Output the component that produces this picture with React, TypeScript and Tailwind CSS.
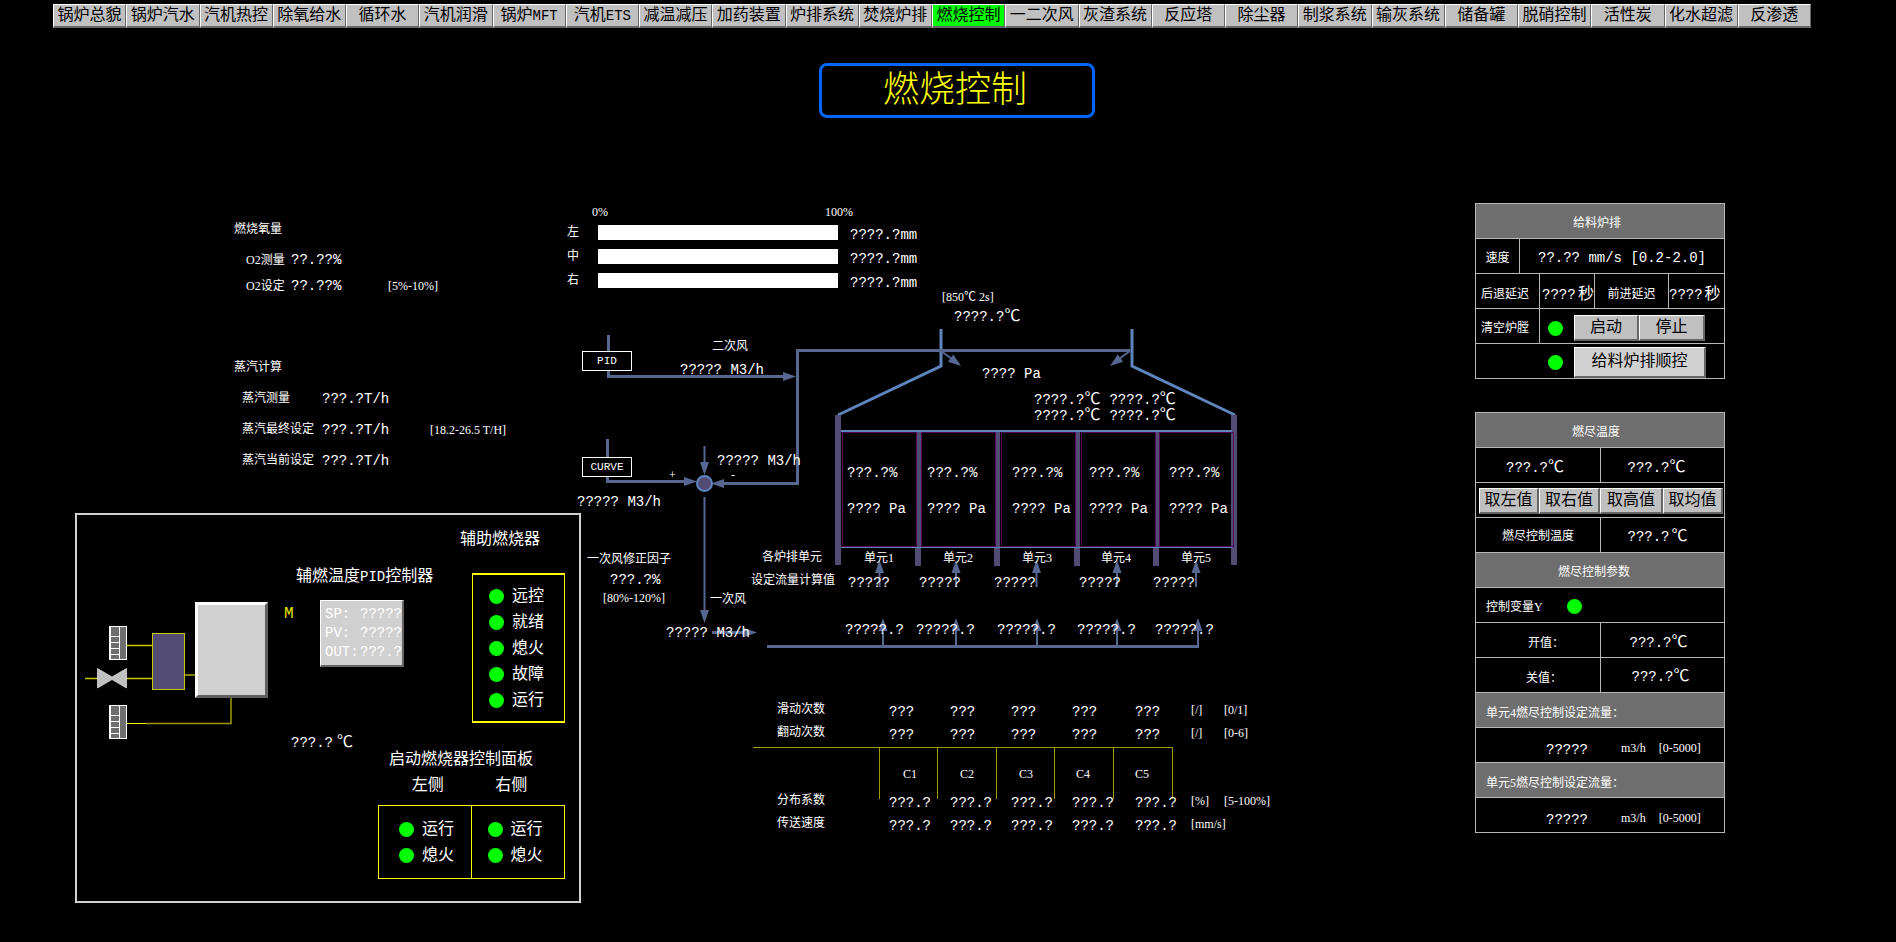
import type { ReactNode } from 'react';

const NAV = [
  '锅炉总貌', '锅炉汽水', '汽机热控', '除氧给水', '循环水', '汽机润滑', '锅炉MFT', '汽机ETS',
  '减温减压', '加药装置', '炉排系统', '焚烧炉排', '燃烧控制', '一二次风', '灰渣系统', '反应塔',
  '除尘器', '制浆系统', '输灰系统', '储备罐', '脱硝控制', '活性炭', '化水超滤', '反渗透',
];
const ACTIVE = '燃烧控制';

const UNITS = [
  { id: 1, cell: 'left-[282px]', label: 'left-[299px]', set: 'left-[283px]', flow: 'left-[280px]', head: 'pl-3.5' },
  { id: 2, cell: 'left-[362px]', label: 'left-[378px]', set: 'left-[354px]', flow: 'left-[351px]', head: 'pl-2.5' },
  { id: 3, cell: 'left-[447px]', label: 'left-[457px]', set: 'left-[429px]', flow: 'left-[432px]', head: 'pl-2' },
  { id: 4, cell: 'left-[524px]', label: 'left-[536px]', set: 'left-[514px]', flow: 'left-[512px]', head: 'pl-1' },
  { id: 5, cell: 'left-[604px]', label: 'left-[616px]', set: 'left-[588px]', flow: 'left-[590px]', head: 'pl-0' },
];

const PIPE = '#566792';
const WALL = '#524b73';
const STEEL = '#5f85bf';

/** Live process value in the fixed-width face. */
function Val({ children, className = '' }: { children: ReactNode; className?: string }) {
  return <span className={`text-sm leading-[18px] whitespace-pre ${className}`}>{children}</span>;
}

/** Temperature value followed by a full-width degree sign. */
function Temp({ value, className = '' }: { value: string; className?: string }) {
  return (
    <span className={`inline-flex h-4 items-center whitespace-pre ${className}`}>
      <Val>{value}</Val>
      <span className="text-base leading-4">℃</span>
    </span>
  );
}

/** Small range, unit or index text. */
function Note({ children, className = '' }: { children: ReactNode; className?: string }) {
  return (
    <span className={`font-['Liberation_Serif','Noto_Sans_CJK_SC',serif] text-xs leading-[18px] whitespace-pre ${className}`}>
      {children}
    </span>
  );
}

function Led() {
  return <span className="inline-block size-[15px] shrink-0 rounded-full bg-[#00ff00]" />;
}

function Key({ children, className = '' }: { children: ReactNode; className?: string }) {
  return (
    <button
      type="button"
      className={`border-t border-l border-r-2 border-b-2 border-t-white border-l-white border-r-[#666666] border-b-[#666666] text-base leading-none whitespace-nowrap text-black ${className}`}
    >
      {children}
    </button>
  );
}

function NavBar() {
  return (
    <nav className="grid grid-cols-[repeat(24,minmax(0,1fr))] pt-1 pr-[85px] pl-[53px]">
      {NAV.map((name) => (
        <button
          key={name}
          type="button"
          className={`h-6 border-t border-r border-b-2 border-l border-t-white border-r-[#666666] border-b-[#666666] border-l-white text-base leading-none whitespace-nowrap text-black ${
            name === ACTIVE ? 'bg-[#00ff00]' : 'bg-[#c0c0c0]'
          }`}
        >
          {/[A-Z]/.test(name) ? (
            <>
              {name.slice(0, 2)}
              <span className="text-sm leading-none">{name.slice(2)}</span>
            </>
          ) : (
            name
          )}
        </button>
      ))}
    </nav>
  );
}

function Readings() {
  return (
    <div className="pt-4 pl-[159px] text-xs">
      <h2 className="leading-[22px]">燃烧氧量</h2>
      <div className="mt-1.5 ml-3 grid auto-rows-[26px] grid-cols-[45px_97px_auto] items-center">
        <span><Note>O2</Note>测量</span>
        <Val>??.??%</Val>
        <span />
        <span><Note>O2</Note>设定</span>
        <Val>??.??%</Val>
        <Note>[5%-10%]</Note>
      </div>
      <h2 className="mt-[58px] leading-[22px]">蒸汽计算</h2>
      <div className="mt-1 ml-2 grid auto-rows-[31px] grid-cols-[80px_108px_auto] items-center">
        <span>蒸汽测量</span>
        <Val>???.?T/h</Val>
        <span />
        <span>蒸汽最终设定</span>
        <Val>???.?T/h</Val>
        <Note>[18.2-26.5 T/H]</Note>
        <span>蒸汽当前设定</span>
        <Val>???.?T/h</Val>
        <span />
      </div>
    </div>
  );
}

function Ladder({ x, y }: { x: number; y: number }) {
  return (
    <g transform={`translate(${x} ${y})`}>
      <rect width="18" height="34" fill="#6e6e6e" />
      <path d="M10.5 0V34M17.5 0V34M0 0.5H18M0 10.5H10M0 16.5H10M0 22.5H10M0 28.5H10M0 33.5H18" stroke="#fff" strokeWidth="1" fill="none" />
      <path d="M1 0V34" stroke="#fff" strokeWidth="2" />
    </g>
  );
}

function LampRow({ name }: { name: string }) {
  return (
    <li className="flex h-[26px] items-center gap-2">
      <Led />
      <span className="pt-0.5">{name}</span>
    </li>
  );
}

function BurnerPanel() {
  return (
    <section className="relative mt-[37px] flex h-[390px] justify-end border-2 border-[#d0d0d0] pr-3.5 text-base leading-5">
      <svg className="absolute top-0 left-0" width="300" height="386" viewBox="77 515 300 386" aria-hidden="true">
        <path d="M127 645.5H152M85 678.5H98M126 678.5H152" stroke="#c8c800" strokeWidth="1.5" />
        <path d="M185 675H195" stroke="#808000" strokeWidth="2" />
        <path d="M127 723.5H146" stroke="#ffff00" strokeWidth="1" />
        <path d="M146 723.5H231V698" stroke="#a09a00" strokeWidth="1.5" fill="none" />
        <rect x="152.5" y="633.5" width="32" height="56" fill={WALL} stroke="#c8c800" />
        <rect x="195" y="602" width="73" height="96" fill="#d0d0d0" />
        <path d="M195 602H268L265 605H198V695L195 698Z" fill="#fff" />
        <path d="M268 602V698H195L198 695H265V605Z" fill="#606060" />
        <Ladder x={109} y={626} />
        <Ladder x={109} y={705} />
        <path d="M97.5 668.5L112 677L126.5 668.5V688L112 679.5L97.5 688Z" fill="#c0c0c0" stroke="#e8e8e8" strokeWidth="0.7" />
      </svg>
      <h3 className="absolute top-[52px] left-[219px] whitespace-nowrap">
        辅燃温度<span className="text-sm">PID</span>控制器
      </h3>
      <span className="absolute top-[91px] left-[207px] text-base leading-4 text-[#e6e600]">M</span>
      <dl className="absolute top-[85px] left-[243px] grid h-[67px] w-[84px] grid-cols-[35px_1fr] content-center gap-y-0.5 border-t border-r-2 border-b-2 border-l border-t-white border-r-[#666666] border-b-[#666666] border-l-white bg-[#d0d0d0] pl-1 text-sm leading-[17px]">
        <dt>SP:</dt>
        <dd>?????</dd>
        <dt>PV:</dt>
        <dd>?????</dd>
        <dt>OUT:</dt>
        <dd>???.?</dd>
      </dl>
      <Temp value="???.?" className="absolute top-[220px] left-[214px] gap-1" />

      <div className="flex w-[187px] flex-col items-end pt-[15px]">
        <h3 className="pr-[25px]">辅助燃烧器</h3>
        <ul className="mt-[23px] w-[93px] border border-y-2 border-[#ffff00] py-2 pl-4">
          {['远控', '就绪', '熄火', '故障', '运行'].map((name) => (
            <LampRow key={name} name={name} />
          ))}
        </ul>
        <h3 className="mt-[27px] w-full pl-[11px]">启动燃烧器控制面板</h3>
        <div className="mt-1.5 grid w-full grid-cols-2 text-center">
          <span className="pl-1.5">左侧</span>
          <span className="pr-3.5">右侧</span>
        </div>
        <div className="mt-[9px] grid w-full grid-cols-2 border border-[#ffff00]">
          <ul className="border-r border-[#ffff00] py-2.5 pl-5">
            <LampRow name="运行" />
            <LampRow name="熄火" />
          </ul>
          <ul className="py-2.5 pl-4">
            <LampRow name="运行" />
            <LampRow name="熄火" />
          </ul>
        </div>
      </div>
    </section>
  );
}

function LevelBars() {
  return (
    <div>
      <div className="flex h-[17px] pl-[27px]">
        <Note className="w-[233px] leading-3">0%</Note>
        <Note className="leading-3">100%</Note>
      </div>
      {['左', '中', '右'].map((side) => (
        <div key={side} className="flex h-6 items-center">
          <span className="w-[33px] pt-0.5 pl-0.5 text-xs">{side}</span>
          <div className="h-[15px] w-[240px] bg-white" />
          <Val className="ml-3 pt-1.5">????.?mm</Val>
        </div>
      ))}
    </div>
  );
}

function Arrow({ x, y, angle }: { x: number; y: number; angle: number }) {
  return <path d="M0 0L-13 -4.5V4.5Z" fill={PIPE} transform={`translate(${x} ${y}) rotate(${angle})`} />;
}

function Piping() {
  const rooms = [842, 921, 1001, 1081, 1159];
  const dividers = [918.5, 997.5, 1077.5, 1156.5];
  const upper = [879.5, 956, 1036.5, 1117, 1196];
  const lower = [883, 956, 1037, 1117, 1198];
  return (
    <svg className="absolute top-0 left-0" width="700" height="640" viewBox="565 203 700 640" fill="none" aria-hidden="true">
      {/* furnace shell */}
      <path d="M941 329V366L838 415M1132 329V366L1235 415" stroke={STEEL} strokeWidth="3" />
      <rect x="835" y="415" width="6" height="150" fill={WALL} />
      <rect x="1231" y="415" width="6" height="150" fill={WALL} />
      {dividers.map((x) => (
        <g key={x} fill={WALL}>
          <rect x={x - 1.5} y="432" width="4" height="115" />
          <rect x={x - 3.5} y="547" width="6" height="19" />
        </g>
      ))}
      {rooms.map((x) => (
        <rect key={x} x={x + 0.5} y="432.5" width="74" height="114" stroke="#550055" />
      ))}
      <path d="M841 431H1232" stroke={STEEL} strokeWidth="2" />
      <path d="M841 547.5H1232" stroke={STEEL} strokeWidth="1" />

      {/* air ducts */}
      <g stroke={PIPE} strokeWidth="3">
        <path d="M608.5 335V376.5H785" />
        <path d="M1130 350.5H797.5V483.5H722" />
        <path d="M607.5 439V481.5H686" />
        <path d="M941 351L952 359M1130 351L1119 359" strokeWidth="2" />
        <path d="M704.5 446V463" strokeWidth="2" />
        <path d="M704.5 497V612" strokeWidth="2" />
        <path d="M712 632.5H746" />
        <path d="M767 646.5H1199" />
      </g>
      <Arrow x={796} y={376.5} angle={0} />
      <Arrow x={711} y={483.5} angle={180} />
      <Arrow x={697} y={481.5} angle={0} />
      <Arrow x={704.5} y={475} angle={90} />
      <Arrow x={704.5} y={623} angle={90} />
      <Arrow x={757} y={632.5} angle={0} />
      <Arrow x={961} y={366} angle={37} />
      <Arrow x={1110} y={366} angle={143} />
      <circle cx="704.5" cy="483.5" r="7.5" fill={WALL} stroke={STEEL} strokeWidth="2" />

      {/* primary air branches */}
      {upper.map((x) => (
        <g key={x}>
          <path d={`M${x} 570V587`} stroke={PIPE} strokeWidth="2" />
          <Arrow x={x} y={560} angle={-90} />
        </g>
      ))}
      {lower.map((x) => (
        <g key={x}>
          <path d={`M${x} 629V647`} stroke={PIPE} strokeWidth="2" />
          <Arrow x={x} y={618} angle={-90} />
        </g>
      ))}

      {/* distribution bracket */}
      <path d="M753 747.5H1173M879.5 747V799M937.5 747V799M996.5 747V799M1054.5 747V799M1113.5 747V799M1172.5 747V799" stroke="#a09a00" />
    </svg>
  );
}

function StrokeTable() {
  const rows = [
    { name: '滑动次数', value: '???', unit: '[/]', range: '[0/1]' },
    { name: '翻动次数', value: '???', unit: '[/]', range: '[0-6]' },
    null,
    { name: '分布系数', value: '???.?', unit: '[%]', range: '[5-100%]' },
    { name: '传送速度', value: '???.?', unit: '[mm/s]', range: '' },
  ];
  return (
    <table className="absolute top-[495px] left-[212px] w-[500px] table-fixed border-collapse text-left whitespace-nowrap">
      <colgroup>
        <col className="w-[112px]" />
        <col className="w-[61px]" span={3} />
        <col className="w-[63px]" />
        <col className="w-[56px]" />
        <col className="w-[33px]" />
        <col />
      </colgroup>
      <tbody>
        {rows.map((row) =>
          row ? (
            <tr key={row.name} className="h-[23px]">
              <th scope="row" className="p-0 text-xs leading-[18px] font-normal">{row.name}</th>
              {UNITS.map((u) => (
                <td key={u.id} className="px-0 pt-1 pb-0 text-sm leading-[18px]">{row.value}</td>
              ))}
              <td className="p-0 leading-[18px]"><Note>{row.unit}</Note></td>
              <td className="p-0 leading-[18px]"><Note>{row.range}</Note></td>
            </tr>
          ) : (
            <tr key="units" className="h-[45px]">
              <td />
              {UNITS.map((u) => (
                <th key={u.id} scope="col" className={`pt-3.5 pr-0 pb-0 leading-[18px] font-normal ${u.head}`}>
                  <Note>C{u.id}</Note>
                </th>
              ))}
            </tr>
          ),
        )}
      </tbody>
    </table>
  );
}

function Mimic() {
  return (
    <section className="relative -ml-4 h-[640px] w-[712px] leading-[18px]">
      <Piping />
      <LevelBars />

      <Note className="absolute top-[85px] left-[377px]">[850℃ 2s]</Note>
      <Temp value="????.?" className="absolute top-[106px] left-[389px]" />
      <Val className="absolute top-[162px] left-[417px]">???? Pa</Val>
      <div className="absolute top-[189px] left-[469px] grid grid-cols-2 gap-x-[9px]">
        <Temp value="????.?" />
        <Temp value="????.?" />
        <Temp value="????.?" />
        <Temp value="????.?" />
      </div>

      <span className="absolute top-[148px] left-[17px] flex h-5 w-[50px] items-center justify-center border border-white bg-black text-[11px]">PID</span>
      <span className="absolute top-[254px] left-[17px] flex h-5 w-[50px] items-center justify-center border border-white bg-black text-[11px]">CURVE</span>
      <span className="absolute top-[135px] left-[147px] text-xs leading-[18px]">二次风</span>
      <Val className="absolute top-[158px] left-[115px]">????? M3/h</Val>
      <Val className="absolute top-[249px] left-[152px]">????? M3/h</Val>
      <Note className="absolute top-[263px] left-[104px]">+</Note>
      <Note className="absolute top-[263px] left-[166px]">-</Note>
      <Val className="absolute top-[290px] left-[12px]">????? M3/h</Val>
      <span className="absolute top-[348px] left-[22px] text-xs leading-[18px]">一次风修正因子</span>
      <Val className="absolute top-[368px] left-[45px]">???.?%</Val>
      <Note className="absolute top-[386px] left-[38px]">[80%-120%]</Note>
      <span className="absolute top-[388px] left-[145px] text-xs leading-[18px]">一次风</span>
      <Val className="absolute top-[421px] left-[101px]">????? M3/h</Val>

      <span className="absolute top-[346px] left-[197px] text-xs leading-[18px]">各炉排单元</span>
      <span className="absolute top-[369px] left-[186px] text-xs leading-[18px]">设定流量计算值</span>
      {UNITS.map((u) => (
        <div key={u.id}>
          <Val className={`absolute top-[261px] ${u.cell}`}>???.?%</Val>
          <Val className={`absolute top-[297px] ${u.cell}`}>???? Pa</Val>
          <span className={`absolute top-[346px] text-xs leading-[18px] ${u.label}`}>
            单元<Note>{u.id}</Note>
          </span>
          <Val className={`absolute top-[371px] ${u.set}`}>?????</Val>
          <Val className={`absolute top-[418px] ${u.flow}`}>?????.?</Val>
        </div>
      ))}
      <StrokeTable />
    </section>
  );
}

function Row({ children, className = '' }: { children: ReactNode; className?: string }) {
  return <div className={`flex h-[35px] items-stretch border-b border-[#b8b8b8] ${className}`}>{children}</div>;
}

function Cell({ children, className = '' }: { children?: ReactNode; className?: string }) {
  return <div className={`flex items-center border-[#b8b8b8] ${className}`}>{children}</div>;
}

function FeederPanel() {
  return (
    <section className="border-x border-t border-[#b8b8b8] text-xs">
      <Row className="bg-[#6e6e6e]">
        <h2 className="flex flex-1 items-center justify-center pt-[5px] pr-1.5">给料炉排</h2>
      </Row>
      <Row>
        <Cell className="w-11 justify-center border-r pt-[5px]">速度</Cell>
        <Cell className="flex-1 justify-center pt-1"><Val>??.?? mm/s [0.2-2.0]</Val></Cell>
      </Row>
      <Row>
        <Cell className="w-16 border-r pt-2 pl-[5px]">后退延迟</Cell>
        <Cell className="w-[55px] justify-between border-r pt-2 pl-0.5"><Val>????</Val><span className="text-base leading-4">秒</span></Cell>
        <Cell className="w-[74px] justify-center border-r pt-2">前进延迟</Cell>
        <Cell className="flex-1 gap-0.5 pt-2"><Val>????</Val><span className="text-base leading-4">秒</span></Cell>
      </Row>
      <Row>
        <Cell className="w-16 border-r pt-[5px] pl-[5px]">清空炉膛</Cell>
        <Cell className="flex-1 pt-1 pl-2">
          <Led />
          <Key className="ml-[11px] h-[26px] w-[65px] bg-[#c0c0c0]">启动</Key>
          <Key className="h-[26px] w-[66px] bg-[#c0c0c0]">停止</Key>
        </Cell>
      </Row>
      <Row>
        <Cell className="flex-1 pt-0.5 pl-[72px]">
          <Led />
          <Key className="ml-[11px] h-[31px] w-[132px] bg-[#d0d0d0]">给料炉排顺控</Key>
        </Cell>
      </Row>
    </section>
  );
}

function BurnoutPanel() {
  return (
    <section className="mt-[33px] border-x border-t border-[#b8b8b8] text-xs">
      <Row className="bg-[#6e6e6e]">
        <h2 className="flex flex-1 items-center justify-center pt-[5px] pr-2">燃尽温度</h2>
      </Row>
      <Row>
        <Cell className="w-[125px] justify-center border-r pt-[5px] pr-1.5"><Temp value="???.?" /></Cell>
        <Cell className="flex-1 justify-center pt-[5px] pr-3"><Temp value="???.?" /></Cell>
      </Row>
      <Row>
        <Cell className="flex-1 pt-0.5 pl-[3px]">
          <Key className="h-[26px] w-[60px] bg-[#c0c0c0]">取左值</Key>
          <Key className="h-[26px] w-[61px] bg-[#c0c0c0]">取右值</Key>
          <Key className="h-[26px] w-[63px] bg-[#c0c0c0]">取高值</Key>
          <Key className="h-[26px] w-[60px] bg-[#c0c0c0]">取均值</Key>
        </Cell>
      </Row>
      <Row>
        <Cell className="w-[125px] justify-center border-r pt-1">燃尽控制温度</Cell>
        <Cell className="flex-1 justify-center pt-1 pr-2.5"><Temp value="???.?" className="gap-0.5" /></Cell>
      </Row>
      <Row className="bg-[#6e6e6e]">
        <h2 className="flex flex-1 items-center justify-center pt-[5px] pr-3">燃尽控制参数</h2>
      </Row>
      <Row>
        <Cell className="flex-1 pt-0.5 pl-2.5">
          <span className="w-[81px] pt-0.5">控制变量<Note>Y</Note></span>
          <Led />
        </Cell>
      </Row>
      <Row>
        <Cell className="w-[125px] justify-center border-r pt-[7px] pl-4">开值：</Cell>
        <Cell className="flex-1 justify-center pt-[5px] pr-2"><Temp value="???.?" /></Cell>
      </Row>
      <Row>
        <Cell className="w-[125px] justify-center border-r pt-[7px] pl-3">关值：</Cell>
        <Cell className="flex-1 justify-center pt-1 pr-1"><Temp value="???.?" /></Cell>
      </Row>
      {[4, 5].map((n) => (
        <div key={n}>
          <Row className="bg-[#6e6e6e]">
            <h2 className="flex-1 pt-[5px] pl-2.5 leading-8">单元<Note>{n}</Note>燃尽控制设定流量：</h2>
          </Row>
          <Row>
            <Cell className="flex-1 pt-[5px] pl-[70px]">
              <Val className="w-[75px] pt-1">?????</Val>
              <Note>m3/h</Note>
              <Note className="ml-[13px]">[0-5000]</Note>
            </Cell>
          </Row>
        </div>
      ))}
    </section>
  );
}

export default function App() {
  return (
    <div className="min-h-screen bg-black font-['Liberation_Mono','Noto_Sans_CJK_SC',monospace] text-white">
      <NavBar />
      <header className="flex justify-center pt-[35px] pl-[18px]">
        <h1 className="flex h-[55px] w-[276px] items-center justify-center rounded-lg border-[3px] border-[#0066ff] pt-1 pr-1 text-4xl leading-none font-light text-[#ffff00]">
          燃烧控制
        </h1>
      </header>
      <main className="mt-[85px] flex items-start pr-[171px] pl-[75px]">
        <div className="w-[506px] shrink-0">
          <Readings />
          <BurnerPanel />
        </div>
        <Mimic />
        <aside className="ml-auto w-[250px] shrink-0">
          <FeederPanel />
          <BurnoutPanel />
        </aside>
      </main>
    </div>
  );
}
